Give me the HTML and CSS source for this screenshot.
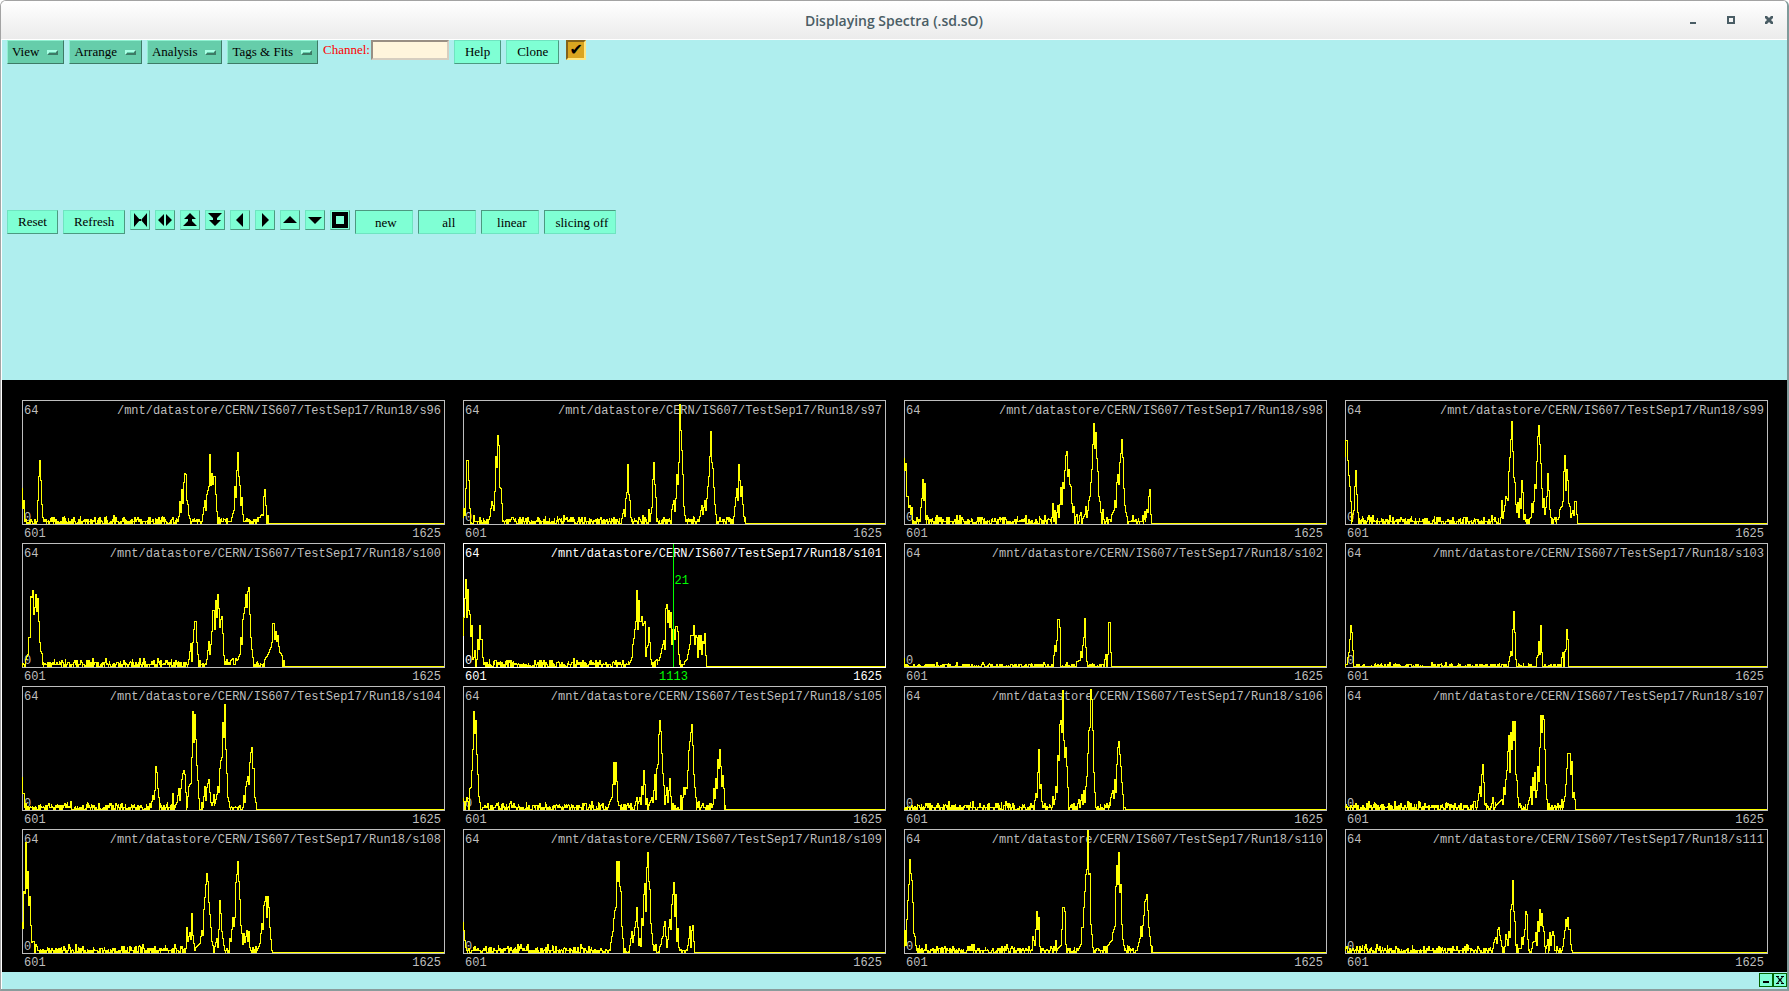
FILE: index.html
```html
<!DOCTYPE html>
<html lang="en">
<head>
  <meta charset="UTF-8">
  <meta name="viewport" content="width=device-width, initial-scale=1.0">
  <title>Displaying Spectra (.sd.sO)</title>
  <link rel="stylesheet" href="styles.css">
</head>
<body>
  <div class="window">
    <header class="titlebar">
      <h1>Displaying Spectra (.sd.sO)</h1>
      <div class="window-controls">
        <button aria-label="Minimize"><svg width="10" height="10"><path d="M2 7h6v2H2z"/></svg></button>
        <button aria-label="Maximize"><svg width="10" height="10"><path fill-rule="evenodd" d="M1 1h8v8H1zM3 3v4h4V3z"/></svg></button>
        <button aria-label="Close"><svg width="10" height="10"><path d="M1 1h2l2 2 2-2h2v2L7 5l2 2v2H7L5 7 3 9H1V7l2-2-2-2z"/></svg></button>
      </div>
    </header>

    <section class="controls">
      <div class="toolbar">
        <button class="btn menu">View<span class="mark"></span></button>
        <button class="btn menu">Arrange<span class="mark"></span></button>
        <button class="btn menu">Analysis<span class="mark"></span></button>
        <button class="btn menu">Tags &amp; Fits<span class="mark"></span></button>
        <div class="field">
          <label for="channel">Channel:</label>
          <input type="text" id="channel">
        </div>
        <button class="btn">Help</button>
        <button class="btn">Clone</button>
        <input type="checkbox" class="toggle" aria-label="Toggle" checked>
      </div>

      <div class="toolbar">
        <button class="btn">Reset</button>
        <button class="btn">Refresh</button>
        <button class="btn icon" aria-label="Compress"><svg width="16" height="16"><path d="M2 1l6 7-6 7zM15 1L9 8l6 7zM7 7h3v2H7z"/></svg></button>
        <button class="btn icon" aria-label="Expand"><svg width="16" height="16"><path d="M7 2v12L1 8zM9 2v12l6-6z"/></svg></button>
        <button class="btn icon" aria-label="Double up"><svg width="16" height="16"><path d="M8 1l6 6H2zM8 7l7 7H1zM6 6h4v3H6z"/></svg></button>
        <button class="btn icon" aria-label="Double down"><svg width="16" height="16"><path d="M1 1h14L8 8zM2 8h12l-6 6zM6 6h4v3H6z"/></svg></button>
        <button class="btn icon" aria-label="Left"><svg width="16" height="16"><path d="M11 1v14L4 8z"/></svg></button>
        <button class="btn icon" aria-label="Right"><svg width="16" height="16"><path d="M5 1v14l7-7z"/></svg></button>
        <button class="btn icon" aria-label="Up"><svg width="16" height="16"><path d="M8 4l7 7H1z"/></svg></button>
        <button class="btn icon" aria-label="Down"><svg width="16" height="16"><path d="M1 5h14l-7 7z"/></svg></button>
        <button class="btn icon" aria-label="Full view"><svg width="16" height="16"><path fill-rule="evenodd" d="M0 0h16v16H0zM4 4v8h8V4z"/></svg></button>
        <button class="btn sunken">new</button>
        <button class="btn sunken">all</button>
        <button class="btn sunken">linear</button>
        <button class="btn sunken wide">slicing off</button>
      </div>
    </section>

    <main class="spectra" id="spectra"></main>

    <footer class="statusbar">
      <button class="mini" aria-label="Hide"><svg width="10" height="10"><path d="M2 6h6v2H2z"/></svg></button>
      <button class="mini" aria-label="Quit"><svg width="10" height="10"><path d="M1 1h3v1H3l2 2 2-2H6V1h3v1H8L6 5l2 3h1v1H6V8h1L5 6 3 8h1v1H1V8h1l2-3-2-3H1z"/></svg></button>
    </footer>
  </div>
  <script src="spectra.js"></script>
</body>
</html>
```

FILE: styles.css
```css
* {
  box-sizing: border-box;
}
body {
  margin: 0;
  background: #fff;
  font-family: "Liberation Serif", serif;
  font-size: 13px;
  color: #000;
}
button {
  font: inherit;
  color: inherit;
  margin: 0;
  padding: 0;
}
svg {
  display: block;
}
.window {
  display: flex;
  flex-direction: column;
  min-height: 100vh;
  border: 1px solid #a3a3a3;
  border-width: 1px 2px 2px 1px;
  border-right-color: #7f9a9a;
  border-bottom-color: #8a9c9c;
  border-radius: 6px 6px 0 0;
  overflow: hidden;
}

/* title bar */
.titlebar {
  display: grid;
  grid-template-columns: 1fr auto 1fr;
  align-items: center;
  height: 39px;
  background: linear-gradient(#fff, #ebebeb);
  border-bottom: 1px solid #fff;
}
.titlebar h1 {
  grid-column: 2;
  margin: 0;
  font-family: "Open Sans", sans-serif;
  font-size: 14px;
  font-weight: 600;
  color: #4a5d65;
}
.window-controls {
  display: flex;
  justify-content: flex-end;
  gap: 28px;
  padding-right: 13px;
}
.window-controls button {
  border: none;
  background: none;
}
.window-controls svg {
  fill: #4a5d65;
}

/* toolbars */
.controls {
  display: grid;
  grid-template-rows: 1fr 1fr;
  height: 340px;
  background: #afeeee;
  border-left: 1px solid #fff;
}
.toolbar {
  display: flex;
  align-items: flex-start;
  gap: 5px;
  padding-left: 5px;
}
.btn {
  height: 24px;
  padding: 0 10px;
  background: #7fffd4;
  border: 1px solid;
  border-color: #6fe4c0 #4c9980 #4c9980 #6fe4c0;
  line-height: 20px;
  white-space: nowrap;
}
.menu {
  display: flex;
  align-items: center;
  gap: 8px;
  padding: 0 5px 0 4px;
  background: #66cdaa;
  border-color: #8ff0d0 #3d7b66 #3d7b66 #8ff0d0;
}
.mark {
  width: 11px;
  height: 5px;
  background: #66cdaa;
  border: 2px solid;
  border-color: #a8ffe4 #3d7b66 #3d7b66 #a8ffe4;
}
.field {
  display: flex;
  align-items: flex-start;
  gap: 1px;
  color: #f00;
}
.field label {
  line-height: 20px;
}
.field input {
  width: 78px;
  height: 20px;
  background: #fff5dc;
  border: 2px solid;
  border-color: #998f84 #d6cec0 #d6cec0 #998f84;
}
.toggle {
  appearance: none;
  width: 20px;
  height: 20px;
  margin: 0 0 0 2px;
  background: #daa520;
  border: 2px solid;
  border-color: #83631a #ffe680 #ffe680 #83631a;
}
.toggle:checked::before {
  content: "✔";
  display: block;
  font: 16px/16px "DejaVu Sans", sans-serif;
  text-align: center;
}
.icon {
  width: 20px;
  height: 20px;
  padding: 1px;
}
.sunken {
  width: 58px;
  padding: 2px 0 0 3px;
  border-color: #4c9980 #6fe4c0 #6fe4c0 #4c9980;
}
.wide {
  width: 72px;
}

/* spectra */
.spectra {
  flex: 1;
  display: grid;
  grid-template-columns: repeat(4, 1fr);
  column-gap: 18px;
  padding: 20px 19px 0 20px;
  background: #000;
  border-left: 1px solid #fff;
  font-family: "Liberation Mono", monospace;
  font-size: 12px;
  line-height: 14px;
  color: #bebebe;
}
.spectrum {
  display: flex;
  flex-direction: column;
}
.plot {
  position: relative;
  flex: 1;
  border: 1px solid currentColor;
}
.spectrum.active {
  color: #fff;
}
.labels {
  display: flex;
  justify-content: space-between;
  padding: 3px 3px 0 1px;
}
.zero {
  position: absolute;
  left: 1px;
  bottom: -1px;
}
.trace {
  position: absolute;
  left: -1px;
  top: -1px;
  width: calc(100% + 2px);
  height: calc(100% + 2px);
  overflow: visible;
  fill: none;
  stroke: #ff0;
  shape-rendering: crispEdges;
}
.trace path {
  vector-effect: non-scaling-stroke;
}
.axis {
  display: grid;
  grid-template-columns: 1fr auto 1fr;
  height: 18px;
  padding: 2px 4px 0 2px;
}
.axis .max {
  grid-column: 3;
  text-align: right;
}
.cursor {
  position: absolute;
  left: 50%;
  top: 0;
  bottom: 0;
  padding: 30px 0 0 1px;
  margin-left: -2px;
  border-left: 1px solid #0f0;
  color: #0f0;
}
.position {
  color: #0f0;
}

/* status bar */
.statusbar {
  display: flex;
  justify-content: flex-end;
  height: 17px;
  padding-top: 1px;
  background: #afeeee;
  border-left: 1px solid #fff;
}
.mini {
  width: 14px;
  height: 14px;
  padding: 1px;
  background: #7fffd4;
  border: 1px solid #006400;
}
```

FILE: spectra.js
```js
// Traces are "x,height" pairs on a 423 x 125 plot, 64 counts = 123.
// Background counts are filled in wherever the trace is near zero.
const W = 423;
const BASE = 123;

const spectra = [
  { id: "s96", end: 247, trace: "0,37 1,16 2,24 3,2 15,2 16,24 17,48 18,64 19,44 20,20 21,7 22,0 156,2 157,8 158,23 159,12 160,35 161,21 162,42 163,51 164,50 165,24 166,20 167,9 169,3 180,2 181,10 183,24 184,14 185,30 187,38 188,70 189,39 190,51 191,40 192,48 193,48 194,30 195,13 196,1 209,2 210,7 212,14 213,38 214,27 215,54 216,72 217,48 218,39 219,19 220,27 221,10 222,1 237,1 238,7 240,10 241,9 242,28 243,35 244,19 245,2" },
  { id: "s97", end: 283, trace: "0,3 1,16 2,9 3,36 4,64 5,64 6,44 7,16 8,1 26,2 27,8 29,23 31,14 32,33 33,68 34,57 35,89 36,79 37,37 38,36 39,21 40,3 41,0 158,2 159,6 161,15 162,8 163,26 164,32 165,60 166,30 167,24 168,7 169,1 185,2 186,15 187,5 189,17 190,45 191,62 192,40 193,27 194,3 208,3 209,15 211,24 212,13 213,26 214,50 215,40 216,62 217,120 218,94 219,74 220,50 221,18 222,9 223,3 236,2 237,8 239,19 240,10 242,24 243,14 244,26 245,38 246,48 247,68 248,93 249,62 250,56 251,37 252,20 253,10 254,3 270,1 271,8 273,27 274,36 275,24 276,60 277,44 278,28 279,38 280,20 281,8 282,1" },
  { id: "s98", end: 248, trace: "0,67 1,54 2,61 3,28 4,28 5,17 6,19 7,10 8,17 9,4 11,2 16,1 17,17 18,26 19,45 20,24 21,41 22,5 23,0 148,2 149,21 150,4 151,14 152,5 154,19 155,7 156,20 157,37 158,20 159,42 160,36 161,54 162,69 163,73 164,48 165,55 166,40 167,38 168,21 169,12 170,18 171,5 173,10 174,2 177,12 178,4 181,10 182,18 183,7 184,14 185,24 186,28 187,42 188,55 189,80 190,101 191,76 192,92 193,66 194,53 195,28 196,23 197,12 198,5 199,15 200,2 207,1 208,10 210,14 211,24 212,17 213,42 214,50 215,40 216,62 217,71 218,85 219,67 220,36 221,19 222,12 224,4 226,0 238,1 239,9 240,2 241,13 242,3 243,15 244,12 245,28 246,35 247,10 248,0" },
  { id: "s99", end: 233, trace: "0,68 1,84 2,84 3,64 4,49 5,38 6,23 7,1 8,10 9,14 10,38 11,54 12,30 13,12 14,2 156,2 157,24 158,6 160,19 161,28 163,24 164,53 165,67 166,85 167,103 168,73 169,47 170,42 171,20 172,12 173,22 174,7 175,26 176,16 177,44 178,32 179,5 180,10 181,2 186,7 187,21 188,12 189,23 190,40 191,36 192,63 193,88 194,99 195,80 196,61 197,36 198,17 199,26 200,10 201,17 202,28 203,51 204,34 205,15 206,7 207,1 213,1 214,7 215,15 217,18 218,23 219,53 220,69 221,34 222,55 223,44 224,21 225,18 226,7 228,14 229,9 230,23 231,23 232,10 233,0" },
  { id: "s100", end: 264, trace: "0,5 2,3 4,8 6,13 7,30 8,30 9,71 10,70 11,77 12,53 13,60 14,73 15,56 16,69 17,46 18,25 19,16 20,14 21,2 166,3 167,8 169,24 170,6 171,25 172,38 173,46 174,46 175,25 176,13 177,5 178,2 184,2 185,8 187,26 188,13 189,23 190,36 191,57 192,57 193,38 194,67 195,50 196,73 197,59 198,40 199,48 200,51 201,34 202,12 203,1 205,8 206,3 211,9 212,2 216,8 218,13 219,30 220,23 221,48 223,60 224,73 225,60 226,76 227,80 228,53 229,30 230,18 231,10 232,2 242,1 243,8 246,13 249,20 250,25 251,44 252,44 253,28 254,36 255,26 256,32 257,21 258,15 260,12 261,5 263,0" },
  { id: "s101", end: 244, active: true, cursor: 1113, counts: 21, trace: "0,32 1,50 2,69 3,88 4,50 5,78 6,57 7,53 8,31 9,42 10,8 11,10 12,17 13,2 14,8 15,28 16,18 17,42 18,28 19,28 20,10 21,2 167,3 169,10 170,23 171,29 172,38 173,46 174,77 175,38 176,67 177,46 178,46 179,51 180,42 182,46 183,11 184,20 185,22 186,40 187,25 188,8 189,1 194,8 195,3 198,14 200,23 201,27 202,18 203,59 204,63 205,45 206,57 207,40 208,55 209,23 210,38 211,38 212,28 213,41 214,41 215,36 216,13 217,1 222,6 224,8 226,18 227,23 228,32 230,32 231,42 232,23 233,32 234,30 235,10 236,32 237,18 238,32 239,13 240,26 241,24 242,34 243,12 244,0" },
  { id: "s102", end: 208, level: 0.4, trace: "0,10 1,1 149,2 150,12 151,22 152,16 153,27 154,48 155,48 156,40 157,5 158,1 176,7 177,16 178,10 179,22 180,30 181,49 182,20 183,6 184,0 200,2 202,13 203,5 204,13 205,45 206,45 207,15 208,4" },
  { id: "s103", end: 225, level: 0.4, trace: "0,1 2,2 3,10 4,15 5,28 6,42 7,35 8,17 9,5 10,0 163,2 164,6 166,16 167,12 168,38 169,56 170,35 171,8 173,1 191,1 192,10 193,12 194,26 195,13 196,42 197,15 198,4 199,0 216,4 218,15 219,5 220,16 221,18 222,38 223,28 224,2" },
  { id: "s104", end: 236, trace: "0,34 1,17 2,17 3,1 129,3 130,9 131,15 132,11 133,20 134,44 135,38 136,22 137,13 138,1 150,3 151,17 152,3 155,8 157,22 158,10 159,22 160,31 161,37 162,40 163,36 164,18 165,5 166,14 167,24 169,27 170,53 171,99 172,68 173,96 174,71 175,45 176,30 177,12 178,3 180,8 181,0 182,14 183,24 184,10 185,23 187,31 188,18 189,8 190,0 192,16 193,5 195,16 196,24 197,18 198,42 199,50 200,53 201,88 202,73 203,106 204,61 205,37 206,13 207,9 208,3 221,1 222,15 223,8 224,24 226,34 227,26 228,48 229,58 230,63 231,42 232,42 233,13 234,8 235,1" },
  { id: "s105", end: 264, trace: "0,13 2,4 4,13 6,5 7,22 8,23 9,40 10,61 11,99 12,77 13,90 14,56 15,36 16,14 17,8 19,1 145,4 149,13 150,26 151,48 152,26 153,48 154,29 155,9 156,2 173,2 174,13 175,4 177,13 178,6 179,24 180,16 181,40 182,26 183,6 184,12 185,2 189,13 190,8 191,20 192,36 193,11 194,42 195,46 196,76 197,90 198,79 199,57 200,37 201,25 202,6 204,23 205,8 206,20 207,32 208,14 209,1 217,2 218,15 219,3 221,23 222,16 223,23 224,22 225,40 226,60 227,69 228,78 229,86 230,65 231,36 232,23 233,13 234,2 249,1 250,6 251,22 252,12 253,32 254,22 255,51 256,42 257,61 258,44 259,24 260,35 261,22 262,3" },
  { id: "s106", end: 222, trace: "0,5 1,2 130,2 131,10 132,17 133,13 134,38 135,61 136,22 137,26 138,9 139,2 148,2 149,14 150,6 151,11 152,24 153,18 154,55 155,50 156,86 157,90 158,78 159,120 160,70 161,53 162,63 163,44 164,23 165,2 174,2 175,11 176,4 178,16 179,6 180,20 181,8 182,24 183,34 184,57 185,80 186,83 187,121 188,111 189,80 190,38 191,18 192,3 206,2 207,13 209,20 210,12 211,31 212,18 213,46 214,63 215,69 216,56 217,44 218,28 219,16 220,4" },
  { id: "s107", end: 231, trace: "0,2 129,2 130,9 132,2 134,17 135,24 136,14 137,36 138,46 139,28 140,6 141,0 147,2 148,13 149,3 157,11 158,6 159,23 160,16 161,31 162,40 163,59 164,75 165,38 166,78 167,61 168,89 169,70 170,89 171,36 172,30 173,13 174,5 175,1 182,3 185,13 186,24 187,6 188,33 189,20 190,38 191,13 192,20 193,44 194,29 195,63 196,95 197,78 198,95 199,91 200,61 201,26 202,11 203,1 216,2 217,11 218,4 220,14 221,26 222,42 223,57 225,57 226,36 227,49 228,13 229,18 230,11 231,0" },
  { id: "s108", end: 251, trace: "0,32 1,25 2,62 3,60 4,111 5,65 6,82 7,48 8,57 9,28 10,11 12,12 13,3 14,9 17,3 20,0 164,3 165,26 166,12 168,21 169,14 170,40 171,18 172,10 173,5 178,10 180,23 181,18 182,44 183,56 184,69 185,80 186,72 187,51 188,39 189,26 190,12 192,3 195,15 196,6 197,24 198,53 199,40 200,22 202,8 203,3 207,4 208,15 209,12 211,36 212,27 213,36 214,71 215,79 216,92 217,72 218,54 219,28 220,20 221,9 222,20 223,11 225,23 226,12 227,22 228,6 230,2 236,4 238,10 239,20 240,30 241,24 242,48 243,52 244,57 245,36 246,57 247,46 248,26 249,14 250,1" },
  { id: "s109", end: 232, trace: "0,32 1,23 2,13 3,6 5,2 147,3 148,11 150,22 151,35 152,43 153,46 154,92 155,72 156,92 157,67 158,62 159,27 160,15 161,5 166,2 167,8 169,22 170,11 171,18 172,26 173,32 174,46 175,26 176,8 177,15 178,7 179,35 180,28 181,59 182,70 183,42 184,86 185,101 186,72 187,64 188,30 189,20 190,9 191,1 197,2 199,15 200,17 201,27 202,32 203,17 204,6 205,14 206,26 207,34 208,24 209,49 210,59 211,71 212,37 213,59 214,12 215,25 216,6 217,1 224,2 225,8 226,15 227,27 228,6 229,23 230,28 231,12 232,0" },
  { id: "s110", end: 249, trace: "0,7 1,23 2,8 3,34 4,53 5,69 6,94 7,80 8,73 9,51 10,20 11,17 12,8 13,2 128,3 129,17 131,8 132,24 133,42 134,24 135,36 136,7 137,1 151,2 152,13 153,4 157,8 158,24 159,46 160,46 161,42 162,9 163,2 174,4 177,9 178,26 179,26 180,46 181,62 182,79 183,84 184,123 185,79 186,80 187,29 188,19 189,6 190,2 203,2 204,8 208,13 209,21 210,24 211,27 212,67 213,88 214,69 215,101 216,61 217,69 218,29 219,14 220,8 222,2 233,1 234,7 236,15 237,27 238,17 240,38 241,52 242,54 243,59 244,43 245,26 246,17 247,8 249,0" },
  { id: "s111", end: 229, trace: "0,2 148,3 149,11 151,16 152,10 153,24 154,26 155,18 157,7 158,2 160,3 161,19 163,8 164,22 165,16 166,44 167,49 168,73 169,42 170,32 171,8 172,2 176,3 177,16 178,9 180,24 181,42 182,39 183,14 184,5 187,2 188,11 190,12 191,21 192,8 193,32 194,22 195,44 196,28 197,40 198,27 199,22 200,7 201,1 203,14 204,4 205,21 206,8 207,18 208,22 209,18 210,5 211,1 217,1 218,7 220,23 221,34 222,27 223,36 224,24 225,24 226,9 227,4 229,0" }
];

function background(seed) {
  let n = seed * 7919 + 13;
  return function () {
    n = (n * 1664525 + 1013904223) % 4294967296;
    return n / 4294967296;
  };
}

function tracePath(s) {
  const points = s.trace.split(" ").map(p => p.split(",").map(Number));
  const random = background(Number(s.id.slice(1)));
  const level = s.level || 1;
  const noise = () => {
    const r = random();
    const counts = r < 0.3 ? 0 : r < 0.66 ? 1 : r < 0.88 ? 2 : r < 0.98 ? 3 : 4;
    return Math.round(counts * level) * 2;
  };
  let d = "";
  let i = 0;
  for (let x = 0; x < s.end; x++) {
    while (i < points.length - 1 && points[i + 1][0] <= x) i++;
    const [x0, h0] = points[i];
    const [x1, h1] = points[i + 1] || [s.end, 0];
    const h = h0 + (h1 - h0) * (x - x0) / Math.max(1, x1 - x0);
    // several channels share one column, so the background has two readings
    const heights = h < 6 ? [noise(), noise()] : [h - 1];
    for (const v of heights) {
      const y = BASE - Math.round(v) + 0.5;
      d += (d === "" ? "M0.5 " : "V") + y;
    }
    d += "H" + (x + 0.5);
  }
  return d + "V" + (BASE + 0.5) + "H" + (W - 1);
}

document.getElementById("spectra").innerHTML = spectra.map(s => `
  <section class="spectrum${s.active ? " active" : ""}">
    <div class="plot">
      <div class="labels"><span>64</span><span>/mnt/datastore/CERN/IS607/TestSep17/Run18/${s.id}</span></div>
      <span class="zero">0</span>
      <svg class="trace" viewBox="0 0 423 125" preserveAspectRatio="none"><path d="${tracePath(s)}"/></svg>
      ${s.cursor ? `<div class="cursor">${s.counts}</div>` : ""}
    </div>
    <div class="axis"><span>601</span>${s.cursor ? `<span class="position">${s.cursor}</span>` : ""}<span class="max">1625</span></div>
  </section>`).join("");
```
